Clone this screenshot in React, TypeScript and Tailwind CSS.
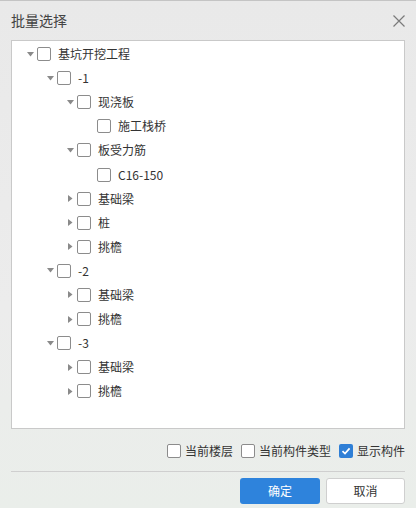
import type { JSX } from "react";

type Node = { label: string; level: number; toggle?: "open" | "closed" };

const TREE: Node[] = [
  { label: "基坑开挖工程", level: 0, toggle: "open" },
  { label: "-1", level: 1, toggle: "open" },
  { label: "现浇板", level: 2, toggle: "open" },
  { label: "施工栈桥", level: 3 },
  { label: "板受力筋", level: 2, toggle: "open" },
  { label: "C16-150", level: 3 },
  { label: "基础梁", level: 2, toggle: "closed" },
  { label: "桩", level: 2, toggle: "closed" },
  { label: "挑檐", level: 2, toggle: "closed" },
  { label: "-2", level: 1, toggle: "open" },
  { label: "基础梁", level: 2, toggle: "closed" },
  { label: "挑檐", level: 2, toggle: "closed" },
  { label: "-3", level: 1, toggle: "open" },
  { label: "基础梁", level: 2, toggle: "closed" },
  { label: "挑檐", level: 2, toggle: "closed" },
];

const PAD = ["pl-[13px]", "pl-[33px]", "pl-[53px]", "pl-[73px]"];

function Box({ checked }: { checked?: boolean }): JSX.Element {
  return checked ? (
    <span className="flex h-[14px] w-[14px] shrink-0 items-center justify-center rounded-[2px] bg-[#2f7fd6]">
      <svg width="10" height="10" viewBox="0 0 10 10">
        <path d="M1.5 5.2 4 7.6 8.6 2.4" fill="none" stroke="#fff" strokeWidth="1.7" />
      </svg>
    </span>
  ) : (
    <span className="block h-[14px] w-[14px] shrink-0 rounded-[2px] border border-[#8c8c8c] bg-white" />
  );
}

function Toggle({ kind }: { kind?: "open" | "closed" }): JSX.Element {
  if (!kind) return <span className="w-[10px] shrink-0" />;
  return (
    <span className="flex w-[10px] shrink-0 items-center justify-center">
      {kind === "open" ? (
        <svg width="7" height="5" viewBox="0 0 7 5">
          <path d="M0 0h7L3.5 4.5z" fill="#8a8a8a" />
        </svg>
      ) : (
        <svg width="5" height="7" viewBox="0 0 5 7">
          <path d="M0 0v7l4.5-3.5z" fill="#8a8a8a" />
        </svg>
      )}
    </span>
  );
}

export default function App(): JSX.Element {
  return (
    <div
      className="flex h-[508px] w-[416px] flex-col border-t border-[#c4c4c4] bg-[linear-gradient(180deg,#e9e9e9_0%,#ececec_60%,#eaeeea_100%)] text-[#333]"
      style={{ fontFamily: '"Microsoft YaHei", "Noto Sans CJK SC", "Noto Sans", sans-serif' }}
    >
      <div className="flex h-[39px] items-center justify-between pl-[11px] pr-[11px]">
        <span className="text-[14px] text-[#444]">批量选择</span>
        <svg width="12" height="12" viewBox="0 0 12 12">
          <path d="M0.5 0.5 11.5 11.5M11.5 0.5 0.5 11.5" stroke="#7a7a7a" strokeWidth="1.2" />
        </svg>
      </div>

      <div className="mx-[11px] h-[389px] border border-[#c9c9c9] bg-white pt-[1px]">
        {TREE.map((n, i) => (
          <div key={i} className={`flex h-[24.1px] items-center ${PAD[n.level]}`}>
            <Toggle kind={n.toggle} />
            <span className="ml-[2px]">
              <Box />
            </span>
            <span className="ml-[7px] text-[12px] leading-none">{n.label}</span>
          </div>
        ))}
      </div>

      <div className="mt-[13px] flex items-center justify-end gap-[8px] pr-[11px] text-[12px]">
        <label className="flex items-center gap-[4px]">
          <Box />
          <span>当前楼层</span>
        </label>
        <label className="flex items-center gap-[4px]">
          <Box />
          <span>当前构件类型</span>
        </label>
        <label className="flex items-center gap-[4px]">
          <Box checked />
          <span>显示构件</span>
        </label>
      </div>

      <div className="mx-[11px] mt-[11px] border-t border-[#cfcfcf]" />

      <div className="mt-[6px] flex justify-end gap-[6px] pr-[11px] text-[12px]">
        <button className="h-[26px] w-[80px] rounded-[3px] bg-[#2e83dc] text-white">确定</button>
        <button className="h-[26px] w-[79px] rounded-[3px] border border-[#cfcfcf] bg-white text-[#333]">
          取消
        </button>
      </div>
    </div>
  );
}
